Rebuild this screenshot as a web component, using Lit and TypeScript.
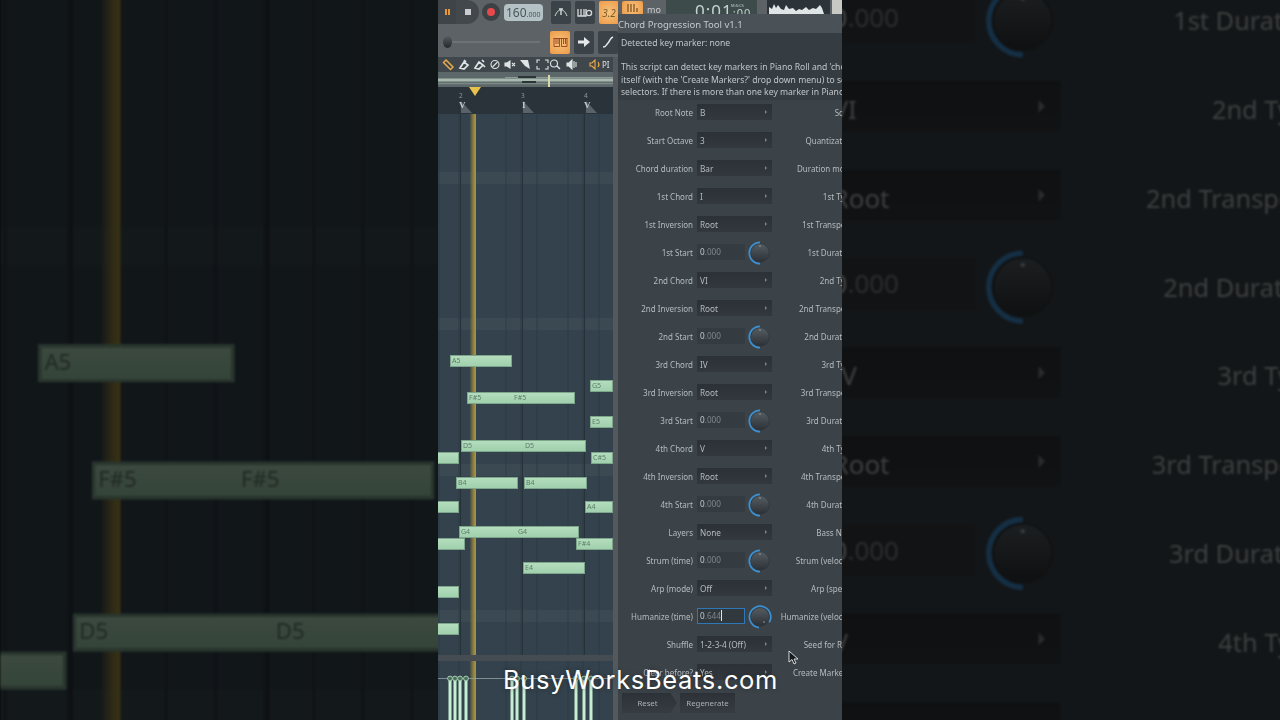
import { LitElement, html, css, svg } from 'lit';
import { customElement } from 'lit/decorators.js';

type Row = { label: string; value: string; kind?: 'num' | 'active' };

const leftRows: Row[] = [
  { label: 'Root Note', value: 'B' },
  { label: 'Start Octave', value: '3' },
  { label: 'Chord duration', value: 'Bar' },
  { label: '1st Chord', value: 'I' },
  { label: '1st Inversion', value: 'Root' },
  { label: '1st Start', value: '000', kind: 'num' },
  { label: '2nd Chord', value: 'VI' },
  { label: '2nd Inversion', value: 'Root' },
  { label: '2nd Start', value: '000', kind: 'num' },
  { label: '3rd Chord', value: 'IV' },
  { label: '3rd Inversion', value: 'Root' },
  { label: '3rd Start', value: '000', kind: 'num' },
  { label: '4th Chord', value: 'V' },
  { label: '4th Inversion', value: 'Root' },
  { label: '4th Start', value: '000', kind: 'num' },
  { label: 'Layers', value: 'None' },
  { label: 'Strum (time)', value: '000', kind: 'num' },
  { label: 'Arp (mode)', value: 'Off' },
  { label: 'Humanize (time)', value: '644', kind: 'active' },
  { label: 'Shuffle', value: '1-2-3-4 (Off)' },
  { label: 'Clear before?', value: 'Yes' },
];

const rightLabels = [
  'Scale', 'Quantization', 'Duration mode', '1st Type', '1st Transpose', '1st Duration',
  '2nd Type', '2nd Transpose', '2nd Duration', '3rd Type', '3rd Transpose', '3rd Duration',
  '4th Type', '4th Transpose', '4th Duration', 'Bass Note', 'Strum (velocity)', 'Arp (speed)',
  'Humanize (velocity)', 'Seed for RNG', 'Create Markers?',
];

// x, y are relative to the piano roll's top left corner
const notes = [
  { x: 12, y: 241, w: 62, labels: ['A5'] },
  { x: 152, y: 266, w: 23, labels: ['G5'] },
  { x: 29, y: 278, w: 108, labels: ['F#5', 'F#5'], second: 46 },
  { x: 152, y: 302, w: 23, labels: ['E5'] },
  { x: 23, y: 326, w: 125, labels: ['D5', 'D5'], second: 63 },
  { x: -4, y: 338, w: 25, labels: [] },
  { x: 153, y: 338, w: 22, labels: ['C#5'] },
  { x: 18, y: 363, w: 62, labels: ['B4'] },
  { x: 86, y: 363, w: 63, labels: ['B4'] },
  { x: 147, y: 387, w: 28, labels: ['A4'] },
  { x: -4, y: 387, w: 25, labels: [] },
  { x: 21, y: 412, w: 120, labels: ['G4', 'G4'], second: 58 },
  { x: -4, y: 424, w: 31, labels: [] },
  { x: 138, y: 424, w: 37, labels: ['F#4'] },
  { x: 85, y: 448, w: 62, labels: ['E4'] },
  { x: -4, y: 472, w: 25, labels: [] },
  { x: -4, y: 509, w: 25, labels: [] },
];

const stems = [12, 17, 22, 28, 74, 79, 86, 138, 146, 153];

const knob = (arc: string, dotX = 13, dotY = 6) => html`
  <svg class="knob" width="26" height="26" viewBox="0 0 26 26">
    <defs>
      <linearGradient id="kb" x1="0" y1="0" x2="0" y2="1">
        <stop offset="0" stop-color="#555d63" /><stop offset="1" stop-color="#2b3035" />
      </linearGradient>
    </defs>
    <circle cx="13" cy="13" r="9.300" fill="url(#kb)" stroke="#2e3439" stroke-width=".6" />
    <path d=${arc} fill="none" stroke="#3c8fd0" stroke-width="1.700" />
    <circle cx=${dotX} cy=${dotY} r=".7" fill="#a8b4bb" />
  </svg>
`;

@customElement('daw-scene')
export class DawScene extends LitElement {
  static styles = css`
    :host {
      display: flex;
      position: relative;
      width: 404px;
      height: 720px;
      overflow: hidden;
      background: #53595d;
      font-family: 'Noto Sans', sans-serif;
    }
    .daw {
      display: flex;
      flex-direction: column;
      width: 180px;
      flex: none;
      background: #53595d;
    }
    .row1 {
      display: flex;
      height: 27px;
      background: #5d6266;
      flex: none;
    }
    .row1 > * { flex: none; }
    .pause {
      width: 18px;
      height: 24px;
      background: #3f4448;
      display: flex;
      align-items: center;
      justify-content: center;
      gap: 1px;
    }
    .pause i { width: 2px; height: 6px; background: #e8963c; }
    .stop {
      width: 23px;
      height: 24px;
      background: #43484c;
      border-radius: 0 12px 12px 0;
      display: flex;
      align-items: center;
      justify-content: center;
    }
    .stop i { width: 6px; height: 6px; background: #c9cdcf; }
    .rec {
      width: 18px;
      height: 18px;
      margin: 3px 0 0 3px;
      border-radius: 50%;
      background: #3c4145;
      display: flex;
      align-items: center;
      justify-content: center;
    }
    .rec i { width: 8px; height: 8px; border-radius: 50%; background: #e8484c; }
    .tempo {
      width: 39px;
      height: 17px;
      margin: 4px 8px 0 4px;
      padding-left: 2px;
      box-sizing: border-box;
      background: #b4c2c6;
      border-radius: 4px;
      color: #4a5659;
      font-size: 12px;
      line-height: 17px;
      white-space: nowrap;
      overflow: hidden;
    }
    .tempo small { font-size: 7px; }
    .btn {
      width: 20px;
      height: 23px;
      margin: 1px 4px 0 0;
      background: #3b4348;
      border-radius: 2px;
      display: flex;
      align-items: center;
      justify-content: center;
      flex: none;
    }
    .btn.on { background: radial-gradient(circle, #f6c482 0%, #ee9a45 100%); }
    .plain {
      color: #7c5a25;
      font-size: 10px;
      font-style: italic;
    }
    .row2 {
      display: flex;
      align-items: center;
      height: 30px;
      background: #5d6266;
      flex: none;
    }
    .slider {
      display: flex;
      align-items: center;
      width: 112px;
      padding-left: 5px;
      flex: none;
      box-sizing: border-box;
    }
    .slider i {
      width: 9px;
      height: 12px;
      border-radius: 50%;
      background: linear-gradient(#555b5f, #24282b);
      flex: none;
    }
    .slider b {
      height: 2px;
      width: 88px;
      background: #6c7276;
    }
    .row2 .btn { margin-top: 0; }
    .tools {
      height: 15px;
      width: 175px;
      flex: none;
      background: #40474c;
      display: flex;
      align-items: center;
      color: #dfe3e4;
      font-size: 8px;
      overflow: hidden;
    }
    .strip { height: 15px; flex: none; display: block; }
    .ruler {
      position: relative;
      height: 27px;
      width: 175px;
      flex: none;
      background: #2a323a;
      color: #8e979c;
      font-size: 6.500px;
    }
    .ruler span { position: absolute; top: 4px; }
    .ruler b {
      position: absolute;
      top: 13px;
      font-size: 9px;
      color: #c5cace;
      font-family: 'Liberation Serif', serif;
    }
    .ruler u {
      position: absolute;
      top: 14px;
      width: 0;
      height: 0;
      border-left: 0 solid transparent;
      border-right: 11px solid transparent;
      border-bottom: 12px solid #59626a;
    }
    .ruler svg { position: absolute; left: 31px; top: 0; }
    .roll {
      position: relative;
      height: 541px;
      width: 175px;
      flex: none;
      overflow: hidden;
      background-color: #33424c;
      background-image:
        repeating-linear-gradient(90deg, transparent 0 14.500px, #2d3a44 14.500px 15.500px),
        repeating-linear-gradient(180deg, transparent 0 58px, #3b4952 58px 70px, transparent 70px 146px);
      background-position: 6.500px 0, 0 0;
    }
    .bar {
      position: absolute;
      top: 0;
      bottom: 0;
      width: 1px;
      background: #26313a;
    }
    .band {
      position: absolute;
      top: 0;
      bottom: 0;
      left: 32px;
      width: 6px;
      background: linear-gradient(90deg, rgba(150, 125, 50, 0.15), #8f8140 60%, #b0963a);
    }
    .note {
      position: absolute;
      height: 12px;
      box-sizing: border-box;
      background: linear-gradient(#b4ddbd, #a0d0ad);
      border: 1px solid #7da58c;
      color: #5e7c69;
      font-size: 7px;
      line-height: 10px;
      padding-left: 1px;
      white-space: nowrap;
    }
    .note span + span { position: absolute; top: 0; }
    .sep { height: 6px; width: 175px; flex: none; background: #454d53; }
    .vel {
      position: relative;
      flex: 1;
      width: 175px;
      background-color: #33424c;
      background-image: repeating-linear-gradient(90deg, transparent 0 14.500px, #2d3a44 14.500px 15.500px);
      background-position: 6.500px 0;
    }
    .vel svg { position: absolute; left: 0; top: 0; }
    .right {
      flex: 1;
      display: flex;
      flex-direction: column;
      min-width: 0;
    }
    .head {
      display: flex;
      height: 14px;
      flex: none;
      overflow: hidden;
      background: #5d6266;
      align-items: flex-start;
    }
    .head > * { flex: none; }
    .head .btn { height: 14px; width: 21px; margin: 1px 4px 0 4px; }
    .head .mo {
      color: #c8cdd0;
      font-size: 9px;
      width: 15px;
      margin-right: 4px;
      line-height: 20px;
    }
    .time {
      width: 91px;
      height: 14px;
      background: #3d4c4a;
      color: #c6d3d2;
      font-size: 17px;
      line-height: 22px;
      position: relative;
      padding-left: 29px;
      box-sizing: border-box;
      white-space: nowrap;
      letter-spacing: 1px;
    }
    .time small {
      position: absolute;
      left: 65px;
      top: 3px;
      font-size: 4px;
      line-height: 5px;
      letter-spacing: 0;
    }
    .wave { margin-left: 10px; background: #2c3339; }
    .lite { width: 12px; height: 14px; margin-left: 2px; background: #c8c8c4; }
    .win {
      flex: 1;
      display: flex;
      flex-direction: column;
      background: #3b4349;
      min-width: 0;
    }
    .title {
      height: 19px;
      flex: none;
      background: #4a5157;
      color: #c5cacd;
      font-size: 9.500px;
      line-height: 21px;
      white-space: nowrap;
    }
    .desc {
      height: 67px;
      flex: none;
      box-sizing: border-box;
      padding: 4px 0 0 3px;
      background: #353c42;
      color: #c2c7ca;
      font-size: 8.600px;
      line-height: 12.200px;
      white-space: nowrap;
      overflow: hidden;
    }
    .grid {
      display: grid;
      grid-template-columns: 75px 75px 78px;
      grid-auto-rows: 28px;
      column-gap: 4px;
      white-space: nowrap;
      color: #b6bbbe;
      font-size: 8px;
      margin-top: -2px;
    }
    .lab { display: flex; align-items: center; justify-content: flex-end; }
    .ctl {
      display: flex;
      align-items: center;
      position: relative;
    }
    .dd {
      width: 75px;
      height: 16px;
      box-sizing: border-box;
      padding: 0 5px 0 3px;
      background: linear-gradient(#2b3136, #32383d);
      display: flex;
      align-items: center;
      justify-content: space-between;
      color: #b6bbbe;
      font-size: 8.200px;
    }
    .dd i {
      width: 0;
      height: 0;
      border-left: 2.500px solid #7d858a;
      border-top: 2.500px solid transparent;
      border-bottom: 2.500px solid transparent;
    }
    .num {
      width: 48px;
      height: 16px;
      box-sizing: border-box;
      padding-left: 3px;
      background: #343b41;
      line-height: 16px;
      color: #7f878c;
      font-size: 8.200px;
      flex: none;
    }
    .num b { font-weight: 400; color: #c4c9cc; }
    .num.active {
      border: 1px solid #2f78b8;
      line-height: 14px;
      padding-left: 2px;
      background: #31383e;
    }
    .num.active u {
      display: inline-block;
      width: 1px;
      height: 11px;
      background: #e0e4e6;
      vertical-align: -2px;
      text-decoration: none;
    }
    .knob { margin: 2px 0 0 2px; flex: none; }
    .foot {
      display: flex;
      gap: 3px;
      padding: 7px 0 0 4px;
      color: #aab0b4;
      font-size: 7.800px;
    }
    .foot div {
      width: 55px;
      height: 20px;
      line-height: 20px;
      text-align: center;
      background: linear-gradient(#2c3237, #363c42);
    }
    .foot .reset { clip-path: polygon(0 0, 88% 0, 100% 50%, 88% 100%, 0 100%); padding-right: 4px; box-sizing: border-box; }
    .cursor { position: absolute; left: 350px; top: 650px; }
  `;

  render() {
    return html`
      <div class="daw">
        <div class="row1">
          <div class="pause"><i></i><i></i></div>
          <div class="stop"><i></i></div>
          <div class="rec"><i></i></div>
          <div class="tempo">160<small>.000</small></div>
          <div class="btn">
            <svg width="14" height="14" viewBox="0 0 14 14" fill="none" stroke="#d5d9db" stroke-width="1">
              <path d="M1 10 C3 5 5 4 7 4 C9 4 11 5 13 10" /><path d="M7 3 V9 M5 3h4" stroke-width="1.400" />
            </svg>
          </div>
          <div class="btn">
            <svg width="16" height="12" viewBox="0 0 16 12" fill="none" stroke="#d5d9db" stroke-width="1.300">
              <path d="M1 2v7h8V2M4 2v7M7 2v7" /><circle cx="12" cy="6" r="2.600" />
            </svg>
          </div>
          <div class="btn on"><span class="plain">3.2</span></div>
        </div>
        <div class="row2">
          <div class="slider"><i></i><b></b></div>
          <div class="btn on">
            <svg width="15" height="9" viewBox="0 0 15 9" fill="none" stroke="#8a3415" stroke-width=".8">
              <path d="M.5 .5h14M1 .5V8.500H6.500V.5M3 .5V6M5 .5V6M8.500 .5V8.500H14V.5M10.500 .5V6M12.500 .5V6" />
            </svg>
          </div>
          <div class="btn">
            <svg width="12" height="10" viewBox="0 0 12 10" fill="#e6e9ea"><path d="M0 3.500h6V0l6 5-6 5V6.500H0z" /></svg>
          </div>
          <div class="btn">
            <svg width="12" height="12" viewBox="0 0 12 12" fill="none" stroke="#e6e9ea" stroke-width="1.500">
              <path d="M1 11c3 0 3-2 5-4s2-5 5-6" />
            </svg>
          </div>
        </div>
        ${this.renderTools()}
        ${this.renderStrip()}
        <div class="ruler">
          <span style="left:21px">2</span><span style="left:83px">3</span><span style="left:146px">4</span>
          <u style="left:23px"></u><u style="left:85px"></u><u style="left:148px"></u>
          <b style="left:21px">V</b><b style="left:84px">I</b><b style="left:146px">V</b>
          <svg width="12" height="10" viewBox="0 0 12 10"><path d="M0 0h12L6 9z" fill="#e8c24a" /></svg>
        </div>
        <div class="roll">
          <div class="bar" style="left:22px"></div>
          <div class="bar" style="left:84px"></div>
          <div class="bar" style="left:146px"></div>
          <div class="band"></div>
          ${notes.map(
            n => html`<div class="note" style="left:${n.x}px;top:${n.y}px;width:${n.w}px">
              ${n.labels.map((l, i) => html`<span style=${i ? `left:${n.second}px` : ''}>${l}</span>`)}
            </div>`,
          )}
        </div>
        <div class="sep"></div>
        <div class="vel">
          <div class="band"></div>
          <svg width="175" height="59" viewBox="0 0 175 59">
            <path d="M0 17.500H175" stroke="#8fa5a5" stroke-width=".8" />
            ${stems.map(
              x => svg`<path d="M${x} 18V59" stroke="#c6eed2" stroke-width="3" />
                <circle cx=${x} cy="17.500" r="2.400" fill="#4d6b5e" stroke="#a5d3b2" stroke-width="1" />`,
            )}
          </svg>
        </div>
      </div>
      <div class="right">
        <div class="head">
          <div class="btn on">
            <svg width="14" height="10" viewBox="0 0 14 10" fill="none" stroke="#7a4a14" stroke-width="1.200"><path d="M2 1v8M5 1v8M8 1v8M11 5v4" /></svg>
          </div>
          <div class="mo">mo</div>
          <div class="time">0:01<span style="font-size:11px">:00</span><small>M:S:CS</small></div>
          <svg class="wave" width="63" height="14" viewBox="0 0 63 14">
            <path d="M2 14V7l3 2 2-5 2 4 2-3 3 4 3 1 2-5 3 4 4-1 3 3 3-2 3 1 4-3 3 3 4-2 3 1 4-4 2 3 2 6z" fill="#dfe5e6" />
          </svg>
          <div class="lite"></div>
        </div>
        <div class="win">
          <div class="title">Chord Progression Tool v1.1</div>
          <div class="desc">Detected key marker: none<br /><br />This script can detect key markers in Piano Roll and 'chord' markers<br />itself (with the 'Create Markers?' drop down menu) to set the<br />selectors. If there is more than one key marker in Piano Roll</div>
          <div class="grid">
            ${leftRows.map(
              (r, i) => html`
                <div class="lab">${r.label}</div>
                <div class="ctl">${this.renderControl(r)}</div>
                <div class="lab">${rightLabels[i]}</div>
              `,
            )}
          </div>
          <div class="foot">
            <div class="reset">Reset</div>
            <div>Regenerate</div>
          </div>
        </div>
      </div>
      <svg class="cursor" width="11" height="15" viewBox="0 0 11 15">
        <path d="M1 1v11l3-2.500 2 4.500 2-1-2-4h4z" fill="#16191b" stroke="#e8eaeb" stroke-width=".9" />
      </svg>
    `;
  }

  renderControl(r: Row) {
    if (r.kind === 'num') {
      return html`<div class="num"><b>0</b>.${r.value}</div>
        ${knob('M13 2.300A10.700 10.700 0 0 0 13 23.700')}`;
    }
    if (r.kind === 'active') {
      return html`<div class="num active"><b>0</b>.${r.value}<u></u></div>
        ${knob('M12 23.600A10.700 10.700 0 1 1 22.300 18.400', 17, 18)}`;
    }
    return html`<div class="dd"><span>${r.value}</span><i></i></div>`;
  }

  renderTools() {
    return html`
      <div class="tools">
        <svg width="175" height="15" viewBox="0 0 175 15" fill="none" stroke="#dfe3e4" stroke-width="1.100">
          <path d="M8 3l7 7-2.500 2.500-7-7z" stroke="#e8a94a" stroke-width="1.500" />
          <path d="M22 11l4-6 4 3-4 4zM26 3l2 2" stroke-width="1.700" />
          <path d="M37 11l4-6 4 3-4 4zM44 3l2 2M45 8l2 2" stroke-width="1.700" />
          <circle cx="57" cy="7.500" r="4" /><path d="M54.500 10L59.500 5" />
          <path d="M67 6h2l3-2v7l-3-2h-2zM74 6l3 3M77 6l-3 3" fill="#dfe3e4" />
          <path d="M82 3h8l2 9-5-3z" fill="#dfe3e4" stroke="none" />
          <path d="M99 6V3h3M107 3h3v3M110 9v3h-3M102 12h-3V9" />
          <circle cx="116" cy="6.500" r="3.500" /><path d="M119 9l3 3" stroke-width="1.500" />
          <path d="M129 6h2l3-3v9l-3-3h-2zM136 4v7M138 5v5" fill="#dfe3e4" />
          <path d="M152 6h2l3-3v9l-3-3h-2zM160 5a4 4 0 0 1 0 5" stroke="#e8a94a" />
          <text x="164" y="10.500" fill="#dfe3e4" stroke="none" font-size="8">PI</text>
        </svg>
      </div>
    `;
  }

  renderStrip() {
    return html`
      <svg class="strip" width="175" height="15" viewBox="0 0 175 15">
        <rect width="175" height="15" fill="#5c6769" />
        <path d="M67 5.500H175" stroke="#8d9896" stroke-width="1" />
        <rect y="6.500" width="175" height="3" fill="#a8b9ae" />
        <path d="M0 11.500H175" stroke="#7c8886" stroke-width="1.500" />
        <rect x="80" y="4" width="18" height="2" fill="#2c3438" />
        <rect x="84" y="9" width="14" height="2" fill="#2c3438" />
        <rect x="110" y="3" width="2" height="12" fill="#d6d8a8" />
      </svg>
    `;
  }
}

@customElement('app-root')
export class AppRoot extends LitElement {
  static styles = css`
    :host {
      display: flex;
      position: relative;
      width: 1280px;
      height: 720px;
      overflow: hidden;
      background: #000;
    }
    .side {
      width: 438px;
      height: 720px;
      flex: none;
      overflow: hidden;
    }
    .side daw-scene {
      transform-origin: 0 360px;
      filter: brightness(0.33) blur(0.4px);
    }
    .left daw-scene { transform: scale(3.17); }
    .right daw-scene { transform: translateX(-840px) scale(3.17); }
    .center { filter: blur(0.3px); }
    .mark {
      position: absolute;
      left: 503px;
      top: 665px;
      color: #fff;
      font-family: Inter, sans-serif;
      font-size: 25.500px;
      letter-spacing: 0.65px;
      line-height: 30px;
      white-space: nowrap;
      text-shadow: 0 0 5px rgba(0, 0, 0, 0.35);
    }
  `;

  render() {
    return html`
      <div class="side left"><daw-scene></daw-scene></div>
      <daw-scene class="center"></daw-scene>
      <div class="side right"><daw-scene></daw-scene></div>
      <div class="mark">BusyWorksBeats.com</div>
    `;
  }
}
